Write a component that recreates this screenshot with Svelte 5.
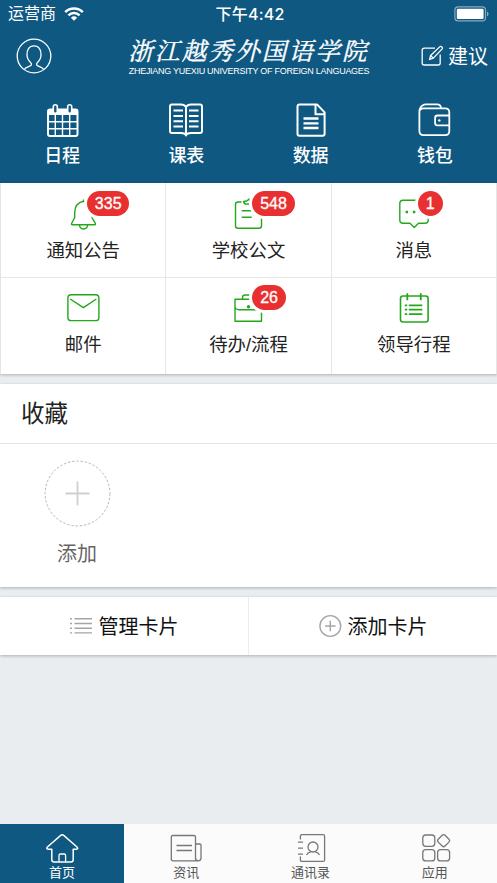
<script lang="ts">
	type IconName = 'calendar' | 'book' | 'document' | 'wallet';

	interface Entry {
		icon: string;
		label: string;
		badge?: number;
	}

	const shortcuts: { icon: IconName; label: string }[] = [
		{ icon: 'calendar', label: '日程' },
		{ icon: 'book', label: '课表' },
		{ icon: 'document', label: '数据' },
		{ icon: 'wallet', label: '钱包' }
	];

	const entries: Entry[] = [
		{ icon: 'bell', label: '通知公告', badge: 335 },
		{ icon: 'clipboard', label: '学校公文', badge: 548 },
		{ icon: 'message', label: '消息', badge: 1 },
		{ icon: 'mail', label: '邮件' },
		{ icon: 'briefcase', label: '待办/流程', badge: 26 },
		{ icon: 'agenda', label: '领导行程' }
	];

	const tabs = [
		{ id: 'home', label: '首页' },
		{ id: 'news', label: '资讯' },
		{ id: 'contacts', label: '通讯录' },
		{ id: 'apps', label: '应用' }
	];

	let activeTab = $state('home');
</script>

<div class="screen">
	<header class="header">
		<div class="status">
			<div class="status__left">
				<span>运营商</span>
				<svg class="wifi" width="20" height="14" viewBox="0 0 20 14" fill="none" stroke="#fff" stroke-width="2.5">
					<path d="M1.2 5.1a12.6 12.6 0 0 1 17.6 0" />
					<path d="M4.4 8.4a8 8 0 0 1 11.2 0" />
					<path d="M6.9 10.7a4.6 4.6 0 0 1 6.2 0L10 13.8z" fill="#fff" stroke="none" />
				</svg>
			</div>
			<span class="status__time">下午4:42</span>
			<svg class="battery" width="36" height="16" viewBox="0 0 36 16">
				<rect x="0.9" y="0.9" width="30.6" height="14" rx="3.2" fill="none" stroke="#fff" stroke-opacity=".5" stroke-width="1.2" />
				<rect x="2.8" y="2.8" width="26.8" height="10.2" rx="1.2" fill="#fff" />
				<path d="M33 5.5c2 .7 2 4.1 0 4.8z" fill="#fff" fill-opacity=".5" />
			</svg>
		</div>

		<div class="title">
			<svg class="avatar" width="36" height="36" viewBox="0 0 36 36" fill="none" stroke="#fff" stroke-width="1.3">
				<circle cx="18" cy="18" r="16.8" />
				<path d="M8.3 31.6c1.1-2.6 5.9-2.9 6.9-4.4.5-1 .3-2-.6-2.8-2.2-1.8-3.5-4.4-3.6-7.4-.2-5 1.8-9.2 7-9.2s7.2 4.2 7 9.2c-.1 3-1.4 5.6-3.6 7.4-.9.8-1.1 1.8-.6 2.8 1 1.5 5.8 1.8 6.9 4.4" />
			</svg>
			<div class="brand">
				<span class="brand__cn">浙江越秀外国语学院</span>
				<span class="brand__en">ZHEJIANG YUEXIU UNIVERSITY OF FOREIGN LANGUAGES</span>
			</div>
			<div class="suggest">
				<svg width="24" height="22" viewBox="0 0 24 22" fill="none" stroke="#fff" stroke-width="1.3" stroke-linejoin="round">
					<path d="M14 3.2H3.2a2 2 0 0 0-2 2V18a2 2 0 0 0 2 2h14a2 2 0 0 0 2-2V9.5" />
					<path d="M8.6 14.5l1-4L19 1.6c1.2-.8 3.2 1 2.2 2.3l-8.9 9.2z" />
					<path d="M9.6 10.5l2.7 2.6" />
				</svg>
				<span>建议</span>
			</div>
		</div>

		<nav class="shortcuts">
			{#each shortcuts as item}
				<div class="shortcut">
					<svg width="36" height="36" viewBox="0 0 36 36" fill="none" stroke="#fff" stroke-width="2" stroke-linejoin="round">
						{#if item.icon === 'calendar'}
							<rect x="4" y="7.5" width="29.5" height="26.5" rx="2" />
							<path d="M4 7h29.5v6H4z" fill="#fff" stroke="none" />
							<path d="M11.3 13v21M18.5 13v21M25.7 13v21M4 19.7h29.5M4 26.7h29.5" stroke-width="1.4" />
							<rect x="9.3" y="2.7" width="4" height="8.6" rx="2" fill="#0f5881" stroke-width="1.6" />
							<rect x="23.7" y="2.7" width="4" height="8.6" rx="2" fill="#0f5881" stroke-width="1.6" />
						{:else if item.icon === 'book'}
							<path d="M18 5c-1-1.8-2.5-2.6-5-2.6H4Q2 2.4 2 4.4V29q0 2 2 2h9c3 0 4.5.7 5 2.5.5-1.8 2-2.5 5-2.5h9q2 0 2-2V4.4q0-2-2-2h-9c-2.5 0-4 .8-5 2.6zV32.5" />
							<path d="M5.5 8.5H15M5.5 14H15M5.5 19.2H15M5.5 24.5H15M21 8.5h9.5M21 14h9.5M21 19.2h9.5M21 24.5h9.5" />
						{:else if item.icon === 'document'}
							<path d="M6.5 2.4H24l7.6 8v21.3q0 2-2 2H6.5q-2 0-2-2V4.4q0-2 2-2z" />
							<path d="M22.5 3v9.3h9" />
							<path d="M10.5 16.5h15M10.5 21.4h15M10.5 26h15" stroke-width="2.4" />
						{:else}
							<path d="M2.4 10V29q0 4.2 4.2 4.2h21.5q4.2 0 4.2-4.2V10.5q0-4.2-4.2-4.2H6.6Q2.6 6.3 2.4 10q0-5 3.5-6.8 1-.8 3-.8H20q4 0 4 3.9" stroke-width="1.8" />
							<path d="M32.3 13.5H20.5q-2.4 0-2.4 2.4v5q0 2.4 2.4 2.4h11.8" stroke-width="1.8" />
							<circle cx="22.3" cy="18.4" r="1.2" fill="#fff" stroke="none" />
						{/if}
					</svg>
					<span>{item.label}</span>
				</div>
			{/each}
		</nav>
	</header>

	<section class="entries">
		{#each entries as item}
			<div class="entry">
				<svg width="40" height="36" viewBox="0 0 40 36" fill="none" stroke="#25a71c" stroke-width="1.4" stroke-linejoin="round">
					{#if item.icon === 'bell'}
						<path d="M20.5 3.5v1.8C14.5 6.5 11.7 11 11.7 17v4.5L8.7 27.3q-.6 1.5.8 1.5h22q1.4 0 .8-1.5L29 21.5V17c0-6-2.5-10.5-8.5-11.7" />
						<path d="M16.5 29c.4 5.3 7.7 5.3 8.1 0" />
					{:else if item.icon === 'clipboard'}
						<path d="M13.5 6H10q-2.5 0-2.5 2.5v21.3q0 2.5 2.5 2.5h21q2.5 0 2.5-2.5V8.500Q33.5 6 31 6h-3.5" />
						<path d="M15.5 5.500q1 3.300 4 2.500h4q3 0 2.500-2.500Q22 6 21 3q-1.500 2.500-5.500 2.500zM13.700 14.700H27M13.700 21.200h10" />
					{:else if item.icon === 'message'}
						<path d="M9 4.200h22q3.200 0 3.200 3.200V24q0 3.200-3.200 3.200h-6.500L20.200 31.500 16 27.200H9q-3.200 0-3.200-3.200V7.400q0-3.200 3.200-3.200z" />
						<path d="M11.600 16h2.400M18.900 16h2.400M26.200 16h2.400" stroke-width="2.4" />
					{:else if item.icon === 'mail'}
						<rect x="4.9" y="4.8" width="31" height="25.8" rx="3.2" />
						<path d="M7.2 9l13.2 8.6L33.3 9" />
					{:else if item.icon === 'briefcase'}
						<path d="M7 9.2h26.5v22H7zM14.5 9V7.500Q14.5 5 17 5h6q2.500 0 2.500 2.500V9M7 16.500q.5 3.200 4 3.200h18.500q3.500 0 4-3.200" />
						<circle cx="20.5" cy="16.7" r="1.7" fill="#25a71c" stroke="none" />
					{:else}
						<rect x="6.5" y="6" width="27.6" height="26" rx="2.5" stroke-width="1.6" />
						<path d="M13.3 3.200v7M26.800 3.200v7M14.800 15.300h13.500M14.800 19.700h13.500M14.800 24.200h13.500M10.800 15.300h2.400M10.800 19.700h2.400M10.800 24.200h2.400" stroke-width="1.8" />
					{/if}
				</svg>
				{#if item.badge}
					<span class="badge">{item.badge}</span>
				{/if}
				<span class="entry__label">{item.label}</span>
			</div>
		{/each}
	</section>

	<section class="favorites">
		<h2>收藏</h2>
		<div class="favorites__body">
			<div class="add">
				<svg width="68" height="68" viewBox="0 0 68 68" fill="none">
					<circle cx="34.5" cy="33.5" r="32.4" stroke="#b5b5b5" stroke-width="1" stroke-dasharray="2.4 1.8" />
					<path d="M34.5 21.5v24M22.5 33.5h24" stroke="#d0d0d0" stroke-width="1.8" />
				</svg>
				<span>添加</span>
			</div>
		</div>
	</section>

	<section class="cards">
		<div class="cards__action">
			<svg width="24" height="24" viewBox="0 0 24 24" stroke="#a5a5a5" stroke-width="1.4">
				<path d="M0 4.8h2M0 9.5h2M0 14.2h2M0 18.9h2M4.5 4.8H22M4.5 9.5H22M4.5 14.2H22M4.5 18.9H22" />
			</svg>
			<span>管理卡片</span>
		</div>
		<div class="cards__action">
			<svg width="24" height="24" viewBox="0 0 24 24" fill="none" stroke="#a5a5a5" stroke-width="1.4">
				<circle cx="11.3" cy="12" r="10.4" />
				<path d="M11.3 6.800v10.400M6.100 12h10.400" />
			</svg>
			<span>添加卡片</span>
		</div>
	</section>

	<nav class="tabbar">
		{#each tabs as tab}
			<button class="tab" class:tab--active={activeTab === tab.id} onclick={() => (activeTab = tab.id)}>
				<svg width="36" height="32" viewBox="0 0 36 32" fill="none" stroke="currentColor" stroke-width="1.3" stroke-linejoin="round">
					{#if tab.id === 'home'}
						<path d="M16.7 3.4q1.5-1.4 3 0L33 15q1.7 2-.6 2.2h-3.2v10.5q0 2.2-2.2 2.2H10q-2.2 0-2.2-2.2V17.2H4.200Q1.800 17 3.400 15z" stroke-width="1.5" />
						<path d="M15 29.8v-6.3q0-1.5 1.5-1.5h3.6q1.5 0 1.5 1.5v6.3" />
					{:else if tab.id === 'news'}
						<path d="M27.5 26.5q0 2.3 2.5 2.3H5Q3.3 28.8 3.3 27V5q0-1.5 1.5-1.5h21.2q1.500 0 1.500 1.500zM27.500 12h4.300q1.200 0 1.200 1.200v12.800q0 2.800-2.700 2.800-2.800 0-2.800-2.800" />
						<path d="M8.5 13.5H24M8.5 18.5H24" />
					{:else if tab.id === 'contacts'}
						<path d="M7.400 7.500V4.200q0-1.500 1.500-1.500h21.200q1.500 0 1.500 1.500v23.700q0 1.500-1.500 1.500H8.900q-1.500 0-1.500-1.500v-3.300M5 10.200h5M5 16.200h5M5 22.200h5" />
						<circle cx="20" cy="15" r="5" />
						<path d="M13.5 23q1.2-2.5 4.2-3.2M26.5 23q-1.2-2.5-4.2-3.2" />
					{:else}
						<rect x="5.8" y="3" width="12" height="11.3" rx="3" />
						<rect x="5.8" y="17.6" width="12" height="11.3" rx="3" />
						<rect x="20.6" y="17.6" width="12" height="11.3" rx="3" />
						<rect x="21.8" y="3.9" width="9.6" height="9.6" rx="2" transform="rotate(45 26.6 8.7)" />
					{/if}
				</svg>
				<span>{tab.label}</span>
			</button>
		{/each}
	</nav>
</div>

<style>
	:global(body) {
		margin: 0;
		background: #e9edf0;
	}

	.screen {
		display: flex;
		flex-direction: column;
		height: 883px;
		background: #e9edf0;
		color: #222;
		font-family: 'Liberation Sans', 'Noto Sans CJK SC', sans-serif;
		overflow: hidden;
	}

	svg {
		display: block;
		flex: none;
	}

	/* ── Header ── */
	.header {
		height: 183px;
		background: #0f5881;
		color: #fff;
	}

	.status {
		display: grid;
		grid-template-columns: 1fr auto 1fr;
		align-items: center;
		height: 28px;
		padding: 0 7px 0 8px;
		font-size: 16px;
		line-height: 28px;
	}

	.status__left {
		display: flex;
		align-items: center;
		gap: 8px;
	}

	.status__time {
		padding-left: 2px;
		font-family: Inter, 'Noto Sans CJK SC', sans-serif;
		font-size: 16px;
		font-weight: 500;
		letter-spacing: 0.2px;
	}

	.battery {
		justify-self: end;
	}

	.title {
		display: grid;
		grid-template-columns: 1fr 242px 1fr;
		align-items: center;
		height: 56px;
		padding: 0 9px 0 16px;
	}

	.brand {
		display: flex;
		flex-direction: column;
		align-items: center;
		margin: 0 3px 0 -3px;
		white-space: nowrap;
	}

	.brand__cn {
		font-family: 'Noto Serif CJK SC', 'Noto Sans CJK SC', serif;
		font-size: 24.5px;
		font-style: italic;
		line-height: 31px;
		letter-spacing: 2.2px;
		margin-right: 1px;
		-webkit-text-stroke: 0.4px #fff;
	}

	.brand__en {
		font-size: 9px;
		line-height: 13px;
		letter-spacing: -0.28px;
	}

	.suggest {
		display: flex;
		align-items: center;
		justify-content: flex-end;
		gap: 3px;
		font-size: 20px;
		line-height: 28px;
	}

	.suggest span {
		padding-top: 1px;
	}

	.shortcuts {
		display: grid;
		grid-template-columns: repeat(4, 1fr);
		padding-top: 18px;
	}

	.shortcut {
		display: flex;
		flex-direction: column;
		align-items: center;
		gap: 4px;
		font-size: 18px;
		font-weight: 500;
		line-height: 28px;
	}

	/* ── Entry grid ── */
	.entries {
		display: grid;
		grid-template-columns: repeat(3, 1fr);
		grid-template-rows: 95px 96px;
		border-left: 1px solid #e4e4e4;
		background: #fff;
		box-shadow: 0 1px 3px rgba(0, 0, 0, 0.25);
	}

	.entry {
		position: relative;
		display: flex;
		flex-direction: column;
		align-items: center;
		box-sizing: border-box;
		padding-top: 13px;
		border-right: 1px solid #e6e6e6;
	}

	.entry:nth-child(-n + 3) {
		border-bottom: 1px solid #e6e6e6;
	}

	.entry:nth-child(n + 4) {
		padding-top: 12px;
	}

	.entry__label {
		margin-top: 5px;
		font-size: 18.4px;
		line-height: 28px;
	}

	.badge {
		position: absolute;
		top: 8px;
		left: calc(50% + 4px);
		box-sizing: border-box;
		min-width: 25px;
		height: 25px;
		padding: 0 7.7px;
		border-radius: 13px;
		background: #e83030;
		box-shadow: 0 0 0 3px #fff;
		color: #fff;
		font-size: 16px;
		line-height: 26px;
		text-align: center;
		-webkit-text-stroke: 0.3px #fff;
	}

	.entry:nth-child(n + 4) .badge {
		top: 7px;
	}

	/* ── Favorites ── */
	.favorites {
		height: 203px;
		margin-top: 10px;
		background: #fff;
		box-shadow: 0 1px 3px rgba(0, 0, 0, 0.25);
	}

	.favorites h2 {
		height: 59px;
		margin: 0;
		padding-left: 21px;
		border-bottom: 1px solid #e4e4e4;
		font-size: 23.5px;
		font-weight: 400;
		line-height: 61px;
	}

	.favorites__body {
		display: flex;
		padding: 16px 43px;
	}

	.add {
		display: flex;
		flex-direction: column;
		align-items: center;
		gap: 12px;
		color: #666;
		font-size: 20px;
		line-height: 28px;
	}

	/* ── Card actions ── */
	.cards {
		display: grid;
		grid-template-columns: 248px 1fr;
		height: 58px;
		margin-top: 10px;
		background: #fff;
		box-shadow: 0 1px 3px rgba(0, 0, 0, 0.25);
	}

	.cards__action {
		display: flex;
		align-items: center;
		justify-content: center;
		gap: 5px;
		color: #111;
		font-size: 20px;
		line-height: 28px;
	}

	.cards__action span {
		padding-top: 2px;
	}

	.cards__action + .cards__action {
		border-left: 1px solid #ececec;
	}

	/* ── Tab bar ── */
	.tabbar {
		display: grid;
		grid-template-columns: repeat(4, 1fr);
		height: 59px;
		margin-top: auto;
		background: #fbfbfb;
	}

	.tab {
		display: flex;
		flex-direction: column;
		align-items: center;
		padding: 8px 0 0;
		border: 0;
		background: none;
		color: #777;
		font-family: inherit;
		font-size: 13px;
		line-height: 18px;
	}

	.tab span {
		color: #555;
	}

	.tab--active {
		background: #0f5881;
		color: #fff;
	}

	.tab--active span {
		color: #fff;
	}
</style>
